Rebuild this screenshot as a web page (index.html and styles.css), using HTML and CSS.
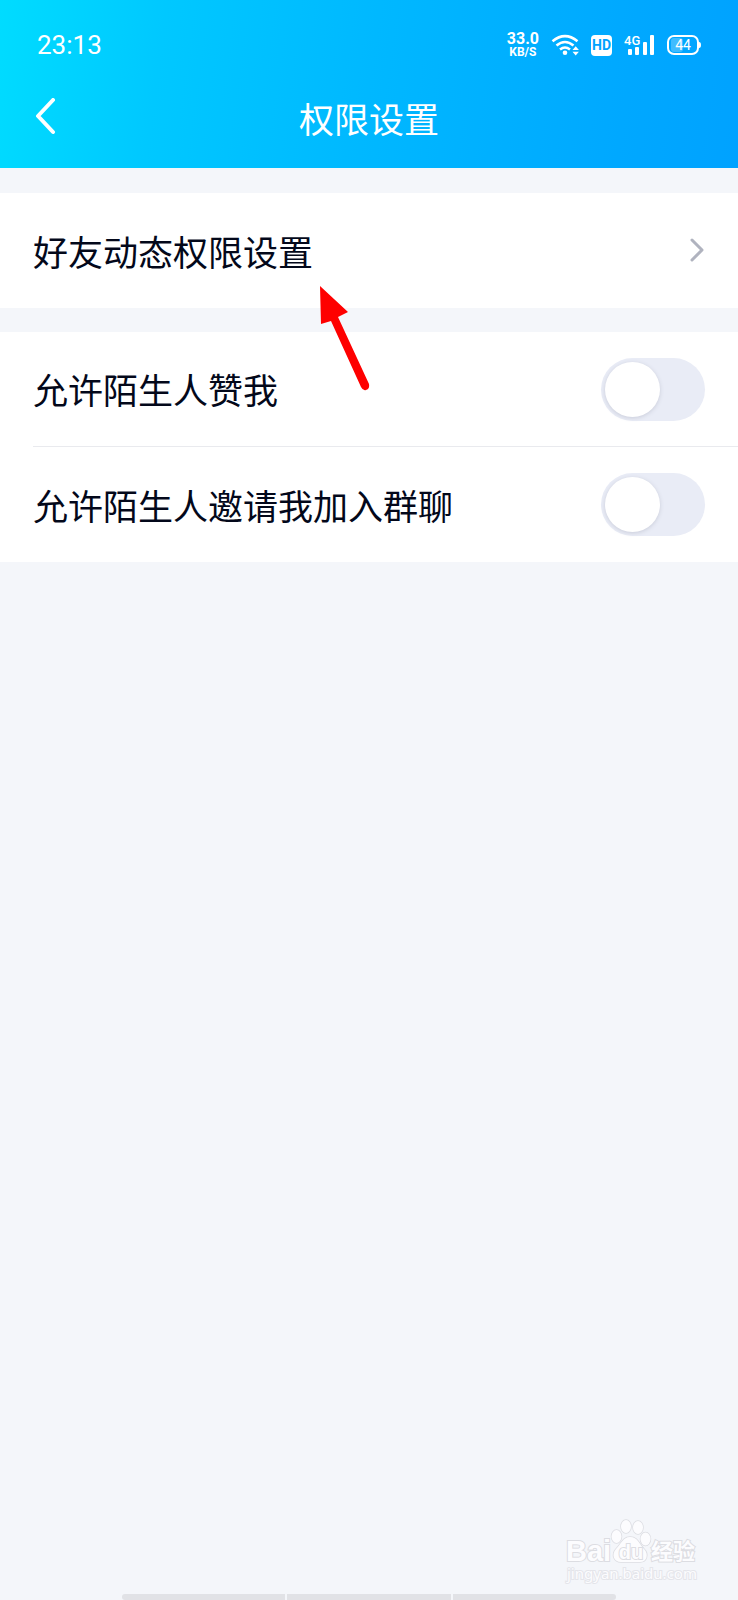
FILE: index.html
```html
<!DOCTYPE html>
<html lang="zh-CN">
<head>
<meta charset="utf-8">
<meta name="viewport" content="width=device-width, initial-scale=1">
<title>权限设置</title>
<link rel="stylesheet" href="styles.css">
</head>
<body>
<div class="screen">
  <header class="header">
    <div class="status">
      <time class="clock">23:13</time>
      <div class="indicators">
        <div class="speed"><span class="speed-value">33.0</span><span class="speed-unit">KB/S</span></div>
        <svg class="icon" width="28" height="22" viewBox="0 0 28 22" fill="none" stroke="currentColor" aria-hidden="true">
          <path d="M1.500 7.200Q14 -3 26.500 7.200M5.500 11.500Q14 4.500 22.500 11.500M9 15.500Q14 11.500 19 15.500" stroke-width="2.600"/>
          <circle cx="14" cy="18.800" r="2.300" fill="currentColor" stroke="none"/>
          <path d="M21.500 16l3.200-3.800l3.200 3.800zM21.500 17.800l3.200 3.800l3.200-3.800z" fill="currentColor" stroke="none"/>
        </svg>
        <span class="hd">HD</span>
        <svg class="icon" width="31" height="22" viewBox="0 0 31 22" aria-hidden="true">
          <text class="network" x="0" y="11">4G</text>
          <g fill="currentColor">
            <rect x="4" y="15" width="4" height="6" rx="1"/>
            <rect x="11" y="13" width="4" height="8" rx="1"/>
            <rect x="19" y="8" width="4" height="13" rx="1"/>
            <rect x="26" y="1" width="4" height="20" rx="1"/>
          </g>
        </svg>
        <svg class="icon" width="34" height="22" viewBox="0 0 34 22" aria-hidden="true">
          <rect x="4" y="4" width="12" height="14" rx="3" fill="#fff" fill-opacity=".25"/>
          <rect x="1" y="2" width="30" height="18" rx="6" fill="none" stroke="currentColor" stroke-width="2"/>
          <path d="M32 8q2 0 2 3t-2 3z" fill="currentColor"/>
          <text class="battery" x="16" y="16" text-anchor="middle">44</text>
        </svg>
      </div>
    </div>
    <div class="titlebar">
      <button class="back" type="button" aria-label="返回">
        <svg width="22" height="40" viewBox="0 0 22 40" fill="none" stroke="currentColor" stroke-width="4" stroke-linecap="round" stroke-linejoin="round"><path d="M19 2L4 18L19 34"/></svg>
      </button>
      <h1 class="title">权限设置</h1>
    </div>
  </header>

  <main class="content">
    <section class="group">
      <a class="row" href="#friends">
        <span class="label">好友动态权限设置</span>
        <svg width="16" height="26" viewBox="0 0 16 26" fill="none" stroke="#b0b3bf" stroke-width="3" stroke-linecap="round" stroke-linejoin="round" aria-hidden="true"><path d="M3 2L13 12L3 22"/></svg>
      </a>
      <svg class="pointer" width="54" height="110" viewBox="0 0 54 110" aria-hidden="true">
        <path d="M2 1L30 27L20 32L51 99Q52 104 48 105Q45 106 43 102L13 36L3 39Z" fill="#fe0000"/>
      </svg>
    </section>
    <section class="group">
      <div class="row">
        <label class="label" for="likes">允许陌生人赞我</label>
        <input class="switch" id="likes" type="checkbox" role="switch">
      </div>
      <div class="row">
        <label class="label" for="invites">允许陌生人邀请我加入群聊</label>
        <input class="switch" id="invites" type="checkbox" role="switch">
      </div>
    </section>
  </main>

  <svg class="watermark" width="136" height="68" viewBox="0 0 136 68" role="img" aria-label="Baidu 经验">
    <g class="mark">
      <text class="mark-bai" x="2" y="43">Bai</text>
      <g stroke-width="1.500">
        <ellipse cx="52.500" cy="18.500" rx="5" ry="6.500"/>
        <ellipse cx="62" cy="8.500" rx="5" ry="6.500"/>
        <ellipse cx="74" cy="9.500" rx="5" ry="6.500"/>
        <ellipse cx="81.500" cy="21" rx="5" ry="6.500"/>
        <path d="M66 19C59 19 57 26 52 31C47 37 50 44 57 44H76C83 44 85 36 80 31C75 26 74 19 66 19Z"/>
      </g>
      <text class="mark-du" x="67" y="41" text-anchor="middle">du</text>
      <text class="mark-cn" x="87" y="41">经验</text>
      <text class="mark-url" x="3" y="61">jingyan.baidu.com</text>
    </g>
  </svg>
  <footer class="navbar"><span></span><span></span><span></span></footer>
</div>
</body>
</html>
```

FILE: styles.css
```css
* {
  box-sizing: border-box;
}

body {
  margin: 0;
  font-family: "Noto Sans CJK SC", sans-serif;
  color: #03081a;
  background: #f4f6fa;
}

.screen {
  position: relative;
  display: flex;
  flex-direction: column;
  min-height: 100vh;
  overflow: hidden;
}

.header {
  color: #fff;
  background: linear-gradient(98deg, #00dcff 0%, #00c8ff 22%, #00b8ff 50%, #00a8ff 84%, #00a2ff 100%);
}

.status {
  display: flex;
  align-items: center;
  justify-content: space-between;
  height: 68px;
  padding: 22px 37px 0;
  font-family: Roboto, sans-serif;
}

.clock {
  font-size: 26px;
}

.indicators {
  display: flex;
  align-items: center;
  gap: 12px;
}

.icon {
  display: block;
}

.speed {
  display: flex;
  flex-direction: column;
  align-items: center;
  font-weight: 700;
}

.speed-value {
  font-size: 16px;
  line-height: 14px;
}

.speed-unit {
  font-size: 12px;
  line-height: 12px;
}

.hd {
  width: 21px;
  border-radius: 4px;
  font-size: 14px;
  font-weight: 700;
  line-height: 21px;
  text-align: center;
  color: #00a2ff;
  background: #fff;
}

.network {
  font-size: 13px;
  font-weight: 500;
  fill: currentColor;
}

.battery {
  font-size: 14px;
  font-weight: 400;
  fill: currentColor;
}

.titlebar {
  display: grid;
  grid-template-columns: 1fr auto 1fr;
  align-items: center;
  height: 100px;
  padding: 0 34px;
}

.back {
  justify-self: start;
  padding: 0;
  border: 0;
  color: inherit;
  background: none;
}

.back svg {
  display: block;
}

.title {
  margin: 0;
  font-size: 35px;
  font-weight: 400;
  line-height: 48px;
}

.content {
  display: grid;
  gap: 24px;
  padding-top: 25px;
}

.group {
  position: relative;
  background: #fff;
}

.row {
  display: flex;
  align-items: center;
  justify-content: space-between;
  height: 115px;
  padding-right: 33px;
  margin-left: 33px;
  color: inherit;
  text-decoration: none;
}

.row:not(:last-of-type) {
  border-bottom: 1px solid #e9eaee;
}

.label {
  font-size: 35px;
  line-height: 48px;
}

.switch {
  appearance: none;
  display: flex;
  align-items: center;
  width: 104px;
  height: 63px;
  margin: 0;
  padding: 4px;
  border-radius: 32px;
  background: #e9ecf6;
}

.switch::before {
  content: "";
  width: 55px;
  height: 55px;
  border-radius: 50%;
  background: #fff;
  box-shadow: 0 1px 4px #c9ccd9;
}

.switch:checked {
  justify-content: flex-end;
  background: #00b4ff;
}

.pointer {
  position: absolute;
  left: 318px;
  top: 92px;
  z-index: 1;
}

.watermark {
  position: absolute;
  right: 38px;
  bottom: 14px;
}

.mark {
  fill: #fcfcfe;
  stroke: #dcdde2;
  stroke-width: 2px;
  paint-order: stroke;
  font-family: "Liberation Sans", sans-serif;
}

.mark-bai {
  font-size: 29px;
  font-weight: 700;
}

.mark-du {
  font-size: 20px;
  font-weight: 700;
}

.mark-cn {
  font-family: "Noto Sans CJK SC", sans-serif;
  font-size: 22px;
  font-weight: 700;
}

.mark-url {
  font-family: "Noto Sans", sans-serif;
  font-size: 15px;
  stroke: #e4e5ea;
}

.navbar {
  display: grid;
  grid-template-columns: repeat(3, 1fr);
  gap: 2px;
  width: 67%;
  height: 6px;
  margin: auto auto 0;
  border-radius: 4px;
  overflow: hidden;
}

.navbar span {
  background: #e1e2e6;
}
```
